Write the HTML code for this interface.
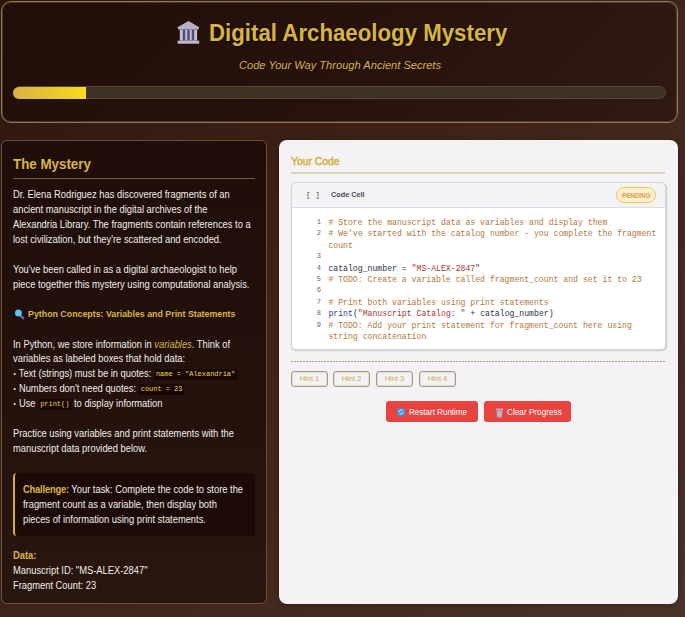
<!DOCTYPE html>
<html><head><meta charset="utf-8">
<style>
*{box-sizing:border-box;margin:0;padding:0}
html,body{width:685px;height:617px;overflow:hidden}
body{background:linear-gradient(135deg,#2d150d 0%,#3c2016 35%,#43281d 65%,#4a3328 100%);font-family:"Liberation Sans",sans-serif;position:relative}
.abs{position:absolute;white-space:pre}
#hdr{position:absolute;left:1px;top:1px;width:677px;height:122px;border:1px solid #8f7a5a;box-shadow:inset 0 0 0 1px rgba(143,122,90,.35);border-radius:10px;background:linear-gradient(135deg,#210e09 0%,#27130c 55%,#2f1b13 100%)}
#title{position:absolute;left:209px;top:20px;font-size:23px;font-weight:bold;color:#d8b443;text-shadow:1px 1px 2px rgba(0,0,0,.6);transform-origin:0 0;transform:scaleX(0.967);white-space:pre}
#sub{position:absolute;left:239px;top:58px;font-size:11.8px;font-style:italic;color:#d2b04c;white-space:pre;transform-origin:0 0;transform:scaleX(0.94)}
#bar{position:absolute;left:13px;top:86px;width:653px;height:13px;border-radius:6.5px;background:#3e3022;border:1px solid #574634}
#fill{position:absolute;left:-1px;top:0;height:12px;width:73px;border-radius:6px 0 0 6px;background:linear-gradient(90deg,#d6b244,#f9d91e)}
#left{position:absolute;left:1px;top:140px;width:266px;height:464px;border:1px solid #66523c;border-radius:6px;background:linear-gradient(180deg,#1f0d09 0%,#23110c 50%,#28160f 100%)}
.lt{position:absolute;left:13px;font-size:10px;transform-origin:0 0;transform:scaleX(0.935);color:#f1ede9;white-space:pre;line-height:15px}
.gold{color:#d8b443}
.code{font-family:"Liberation Mono",monospace;font-size:7.45px;color:#f5d440;background:#170806;padding:1px 2.2px;border-radius:2px;line-height:8.6px;display:inline-block;vertical-align:1px}
#right{position:absolute;left:279px;top:140px;width:399px;height:464px;border-radius:8px;background:#f4f2f5;box-shadow:0 1px 5px rgba(0,0,0,.3)}
#code .ln{height:11.4px;position:relative;padding-left:28.4px;white-space:pre}
#code .n{position:absolute;left:0;width:21px;text-align:right;font-size:7px;top:0px;color:#5f6673}
#code .c{color:#b47740}
#code .s{color:#a83434}
#code .k{color:#3b3c8c}
.hint{position:absolute;top:371px;width:37px;height:15.5px;border:1px solid #a99b85;box-shadow:inset 0 0 0 0.5px rgba(169,155,133,.5);border-radius:3px;font-size:7.5px;color:#c5ad4c;text-align:center;line-height:13.5px}
.btn{position:absolute;top:401px;height:21px;background:#e9433f;border-radius:3px;color:#fff;font-size:8.9px;white-space:pre}
.bul{display:inline-block;transform:scale(0.7)}
</style></head><body>
<div id="hdr"></div>
<svg style="position:absolute;left:177px;top:20px" width="23" height="24" viewBox="0 0 23 24">
<path d="M11.5 0.9 L22.2 7.2 L21.4 9.6 L1.4 9.6 L0.5 7.2 Z" fill="#b6b2c6"/>
<rect x="2.8" y="9.6" width="17.3" height="11" fill="#c4c0d2"/>
<rect x="5.75" y="9.8" width="2.5" height="10.6" fill="#554d7c"/>
<rect x="10.25" y="9.8" width="2.5" height="10.6" fill="#554d7c"/>
<rect x="14.75" y="9.8" width="2.5" height="10.6" fill="#554d7c"/>
<rect x="0.7" y="20.7" width="21.5" height="3" fill="#bebacd"/>
</svg>
<div id="title">Digital Archaeology Mystery</div>
<div id="sub">Code Your Way Through Ancient Secrets</div>
<div id="bar"><div id="fill"></div></div>

<div id="left"></div>
<div class="abs gold" style="left:13px;top:156px;font-size:14.6px;font-weight:bold;transform-origin:0 0;transform:scaleX(0.915)">The Mystery</div>
<div style="position:absolute;left:13px;top:178px;width:242px;height:1px;background:#6f5a42"></div>
<div class="lt" style="top:187px">Dr. Elena Rodriguez has discovered fragments of an
ancient manuscript in the digital archives of the
Alexandria Library. The fragments contain references to a
lost civilization, but they're scattered and encoded.

You've been called in as a digital archaeologist to help
piece together this mystery using computational analysis.</div>
<svg style="position:absolute;left:13px;top:308px" width="12" height="12" viewBox="0 0 12 12"><path d="M7.3 7.6 L10.2 10.2" stroke="#9058b0" stroke-width="2.3" stroke-linecap="round"/><circle cx="5.4" cy="5.1" r="3.5" fill="#3fb0e0"/><circle cx="5.4" cy="5.1" r="3" fill="#55c6ee"/></svg>
<div class="lt gold" style="top:306px;left:28px;font-weight:bold;font-size:9.6px;transform-origin:0 0;transform:scaleX(0.92)">Python Concepts: Variables and Print Statements</div>
<div class="lt" style="top:337.6px;line-height:14.85px">In Python, we store information in <i class="gold">variables</i>. Think of
variables as labeled boxes that hold data:
<span class="bul">•</span> Text (strings) must be in quotes: <span class="code">name = "Alexandria"</span>
<span class="bul">•</span> Numbers don't need quotes: <span class="code">count = 23</span>
<span class="bul">•</span> Use <span class="code">print()</span> to display information

Practice using variables and print statements with the
manuscript data provided below.</div>
<div style="position:absolute;left:13px;top:473px;width:242px;height:62.5px;background:#1b0a07;border-left:2px solid #d4b040;border-radius:4px"></div>
<div class="lt" style="top:482px;left:23px"><b class="gold" style="letter-spacing:-0.2px">Challenge:</b> Your task: Complete the code to store the
fragment count as a variable, then display both
pieces of information using print statements.</div>
<div class="lt" style="top:548px"><b class="gold">Data:</b>
Manuscript ID: "MS-ALEX-2847"
Fragment Count: 23</div>

<div id="right"></div>
<div class="abs" style="left:291px;top:154.5px;font-size:11px;color:#d4b453;-webkit-text-stroke:0.6px #d4b453;transform-origin:0 0;transform:scaleX(0.94)">Your Code</div>
<div style="position:absolute;left:291px;top:172px;width:374px;height:2px;background:#ded2bf"></div>
<div id="cell" style="position:absolute;left:291px;top:182px;width:375px;height:168px;border:1px solid #d3d7dc;border-radius:5px;background:#f3f2f5;box-shadow:0.5px 1px 1.5px rgba(0,0,0,.18)">
 <div style="position:absolute;left:0;right:0;top:24px;bottom:0;background:#fff;border-top:1px solid #dcdee3;border-radius:0 0 4px 4px"></div>
</div>
<div class="abs" style="left:306px;top:191px;font-family:'Liberation Mono',monospace;font-size:7.8px;color:#55555e">[ ]</div>
<div class="abs" style="left:331px;top:190px;font-size:8.1px;font-weight:bold;color:#454a55;transform-origin:0 0;transform:scaleX(0.9)">Code Cell</div>
<div style="position:absolute;left:616px;top:187px;width:40px;height:16px;border:1px solid #f0c95a;border-radius:8px;background:#fcf0d3"></div>
<div class="abs" style="left:621.7px;top:190.5px;font-size:7.2px;font-weight:bold;color:#e39a3c;transform-origin:0 0;transform:scaleX(0.87)">PENDING</div>
<div id="code" style="position:absolute;left:300px;top:217px;font-family:'Liberation Mono',monospace;font-size:8.17px;line-height:11.4px;color:#2c3440">
<div class="ln"><span class="n">1</span><span class="c"># Store the manuscript data as variables and display them</span></div>
<div class="ln"><span class="n">2</span><span class="c"># We've started with the catalog number - you complete the fragment</span></div>
<div class="ln"><span class="n"></span><span class="c">count</span></div>
<div class="ln"><span class="n">3</span></div>
<div class="ln"><span class="n">4</span>catalog_number = <span class="s">"MS-ALEX-2847"</span></div>
<div class="ln"><span class="n">5</span><span class="c"># TODO: Create a variable called fragment_count and set it to 23</span></div>
<div class="ln"><span class="n">6</span></div>
<div class="ln"><span class="n">7</span><span class="c"># Print both variables using print statements</span></div>
<div class="ln"><span class="n">8</span><span class="k">print</span>(<span class="s">"Manuscript Catalog: "</span> + catalog_number)</div>
<div class="ln"><span class="n">9</span><span class="c"># TODO: Add your print statement for fragment_count here using</span></div>
<div class="ln"><span class="n"></span><span class="c">string concatenation</span></div>
</div>
<div style="position:absolute;left:291px;top:361px;width:375px;height:1px;background:linear-gradient(90deg,#ab9c84 2px,transparent 2px);background-size:3px 1px"></div>
<div class="hint" style="left:291px">Hint 1</div>
<div class="hint" style="left:333px">Hint 2</div>
<div class="hint" style="left:376px">Hint 3</div>
<div class="hint" style="left:419px">Hint 4</div>
<div class="btn" style="left:386px;width:92px"><svg width="8" height="8" viewBox="0 0 8 8" style="position:absolute;left:10.7px;top:7.3px"><rect width="8" height="8" rx="1" fill="#4b8ad6"/><path d="M2 4a2 2 0 0 1 3.6-1.2M6 4a2 2 0 0 1-3.6 1.2" stroke="#fff" stroke-width="0.9" fill="none"/></svg><span style="position:absolute;left:22.8px;top:5.6px;transform-origin:0 0;transform:scaleX(0.905)">Restart Runtime</span></div>
<div class="btn" style="left:484px;width:87px"><svg width="9" height="10" viewBox="0 0 9 10" style="position:absolute;left:10.5px;top:6.5px"><rect x="0.8" y="0.6" width="7.4" height="1.6" rx="0.4" fill="#b9b6c2"/><path d="M1.4 2.4h6.2l-0.7 7h-4.8z" fill="#a8a5b3"/><path d="M3 3.2v5.5M4.5 3.2v5.5M6 3.2v5.5" stroke="#d9d7e0" stroke-width="0.55"/></svg><span style="position:absolute;left:22.6px;top:5.6px;transform-origin:0 0;transform:scaleX(0.925)">Clear Progress</span></div>
</body></html>
